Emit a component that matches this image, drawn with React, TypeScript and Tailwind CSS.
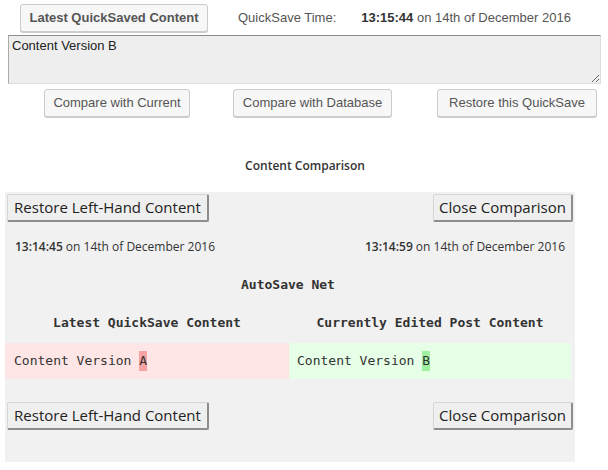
import type { ReactNode } from 'react';

const SANS = { fontFamily: '"Liberation Sans", Arial, sans-serif' };
const UI = { fontFamily: '"Open Sans", "Noto Sans", sans-serif' };
const MONO = { fontFamily: '"DejaVu Sans Mono", "Liberation Mono", monospace' };

function WpButton({ children, className = '' }: { children: ReactNode; className?: string }) {
  return (
    <button
      className={`flex h-[28px] items-center justify-center rounded-[3px] border border-[#cccccc] bg-[#f7f7f7] text-[13px] text-[#555] shadow-[0_1px_0_#cccccc] ${className}`}
      style={SANS}
    >
      {children}
    </button>
  );
}

function PanelButton({ children, className = '' }: { children: ReactNode; className?: string }) {
  return (
    <button
      className={`flex h-[28px] items-center justify-center rounded-[2px] border border-[#d6d6d6] border-b-2 border-r-2 border-b-[#8d8d8d] border-r-[#8d8d8d] bg-[#efefef] text-[15px] text-[#222] ${className}`}
      style={UI}
    >
      {children}
    </button>
  );
}

function Stamp({ time }: { time: string }) {
  return (
    <span className="text-[12px] text-[#333]" style={UI}>
      <b className="font-semibold">{time}</b> on 14th of December 2016
    </span>
  );
}

export default function App() {
  return (
    <div className="h-[470px] w-[608px] bg-white">
      <div className="mt-[4px] flex h-[28px] items-center" style={SANS}>
        <WpButton className="ml-[20px] w-[188px] font-bold text-[#333]">Latest QuickSaved Content</WpButton>
        <span className="ml-[30px] text-[13px] text-[#555]">QuickSave Time:</span>
        <span className="ml-[25px] text-[13px] text-[#555]">
          <b className="text-[#333]">13:15:44</b> on 14th of December 2016
        </span>
      </div>

      <textarea
        readOnly
        defaultValue="Content Version B"
        className="mx-[8px] mt-[3px] block h-[49px] w-[593px] resize-y border border-[#dddddd] border-l-[#aaaaaa] border-t-[#8c8c8c] bg-[#eeeeee] px-[3px] py-0 text-[13px] text-[#222] outline-none"
        style={SANS}
      />

      <div className="mt-[5px] flex">
        <WpButton className="ml-[44px] w-[146px]">Compare with Current</WpButton>
        <WpButton className="ml-[43px] w-[159px]">Compare with Database</WpButton>
        <WpButton className="ml-[45px] w-[160px]">Restore this QuickSave</WpButton>
      </div>

      <div className="mt-[40px] text-center text-[12px] font-semibold text-[#333]" style={UI}>
        <span className="pl-[2px]">Content Comparison</span>
      </div>

      <div className="mt-[17px] ml-[5px] h-[270px] w-[570px] bg-[#f1f1f1] pt-[2px]">
        <div className="flex justify-between px-[2px]">
          <PanelButton className="w-[202px]">Restore Left-Hand Content</PanelButton>
          <PanelButton className="w-[140px]">Close Comparison</PanelButton>
        </div>

        <div className="mt-[16px] flex justify-between px-[10px]">
          <Stamp time="13:14:45" />
          <Stamp time="13:14:59" />
        </div>

        <div className="w-[566px]" style={MONO}>
          <div className="mt-[19px] text-center text-[13px] font-bold text-[#333]">AutoSave Net</div>
          <div className="mt-[18px] grid grid-cols-[284px_282px] text-[13px] font-bold text-[#333]">
            <div className="text-center">Latest QuickSave Content</div>
            <div className="text-center">Currently Edited Post Content</div>
          </div>
          <div className="mt-[11px] grid h-[36px] grid-cols-[284px_282px] text-[13px] text-[#333]">
            <div className="flex items-center bg-[#ffe6e6] pl-[9px]">
              Content Version&nbsp;<span className="bg-[#f5a3a3]">A</span>
            </div>
            <div className="flex items-center bg-[#e6ffe6] pl-[8px]">
              Content Version&nbsp;<span className="bg-[#9ff09f]">B</span>
            </div>
          </div>
        </div>

        <div className="mt-[23px] flex justify-between px-[2px]">
          <PanelButton className="w-[202px]">Restore Left-Hand Content</PanelButton>
          <PanelButton className="w-[140px]">Close Comparison</PanelButton>
        </div>
      </div>
    </div>
  );
}
